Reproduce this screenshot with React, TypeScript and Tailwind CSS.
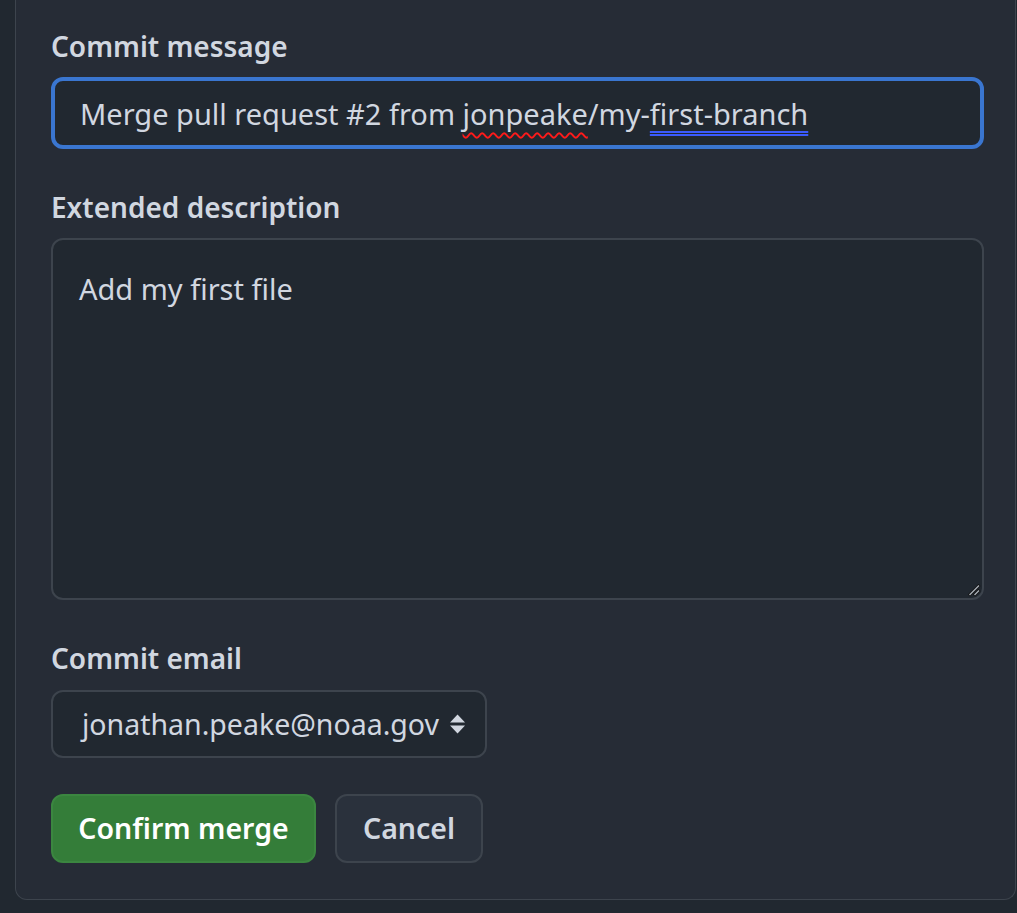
import React from "react";

const font = { fontFamily: '"Noto Sans", "Open Sans", sans-serif' };

const SelectArrows: React.FC = () => (
  <svg width="17" height="20" viewBox="0 0 17 20" className="shrink-0 fill-[#d1d7e0]">
    <path d="M8.5 0.5 L16 8.5 H1 Z" />
    <path d="M8.5 19.5 L16 11.5 H1 Z" />
  </svg>
);

const ResizeGrip: React.FC = () => (
  <svg width="14" height="14" viewBox="0 0 14 14" className="absolute right-[1px] bottom-[1px]">
    <path d="M12.5 2 L2 12.5" stroke="#111" strokeWidth="3" />
    <path d="M12.5 7 L7 12.5" stroke="#111" strokeWidth="3" />
    <path d="M12 2.5 L2.5 12" stroke="#a7adb5" strokeWidth="1.5" />
    <path d="M12 7.5 L7.5 12" stroke="#a7adb5" strokeWidth="1.5" />
  </svg>
);

export default function App() {
  return (
    <div className="min-h-screen bg-[#212830] pl-[15px] pr-px" style={font}>
      <div className="bg-[#262c36] border-x border-b border-[#3d444d] rounded-b-[12px] pl-[35px] pr-[31px] pt-[26px] pb-[36px]">
        {/* Commit message */}
        <label className="block text-[28px] leading-[40px] font-semibold text-[#d1d7e0]">
          Commit message
        </label>
        <div className="mt-[11px] h-[72px] rounded-[12px] border-[4px] border-[#3a76d0] bg-[#212830] pl-[25px] pt-[13px] text-[29px] leading-[40px] text-[#d1d7e0] whitespace-nowrap">
          Merge pull request #2 from{" "}
          <span className="underline decoration-wavy decoration-[#ff1a1a] decoration-[1.5px] underline-offset-[7px]">
            jonpeake
          </span>
          /my-
          <span className="underline decoration-double decoration-[#3b5bff] decoration-[1.5px] underline-offset-[6px]">
            first-branch
          </span>
        </div>

        {/* Extended description */}
        <label className="block mt-[38px] text-[28px] leading-[40px] font-semibold text-[#d1d7e0]">
          Extended description
        </label>
        <div className="relative mt-[11px] h-[362px] rounded-[12px] border-2 border-[#3d444d] bg-[#212830] pl-[26px] pt-[29px] text-[29px] leading-[40px] text-[#d1d7e0]">
          Add my first file
          <ResizeGrip />
        </div>

        {/* Commit email */}
        <label className="block mt-[38px] text-[28px] leading-[40px] font-semibold text-[#d1d7e0]">
          Commit email
        </label>
        <div className="mt-[12px] w-[436px] h-[68px] rounded-[12px] border-2 border-[#3d444d] bg-[#212830] flex items-center justify-between pl-[29px] pr-[19px] text-[28.5px] leading-[40px] text-[#d1d7e0]">
          <span>jonathan.peake@noaa.gov</span>
          <SelectArrows />
        </div>

        {/* Actions */}
        <div className="mt-[36px] flex gap-[19px]">
          <button className="h-[69px] w-[265px] rounded-[12px] bg-[#347d39] border-2 border-[#3b8640] text-white text-[28.5px] font-semibold">
            Confirm merge
          </button>
          <button className="h-[69px] w-[148px] rounded-[12px] bg-[#2a313c] border-2 border-[#3d444d] text-[#d1d7e0] text-[28.5px] font-semibold">
            Cancel
          </button>
        </div>
      </div>
    </div>
  );
}
